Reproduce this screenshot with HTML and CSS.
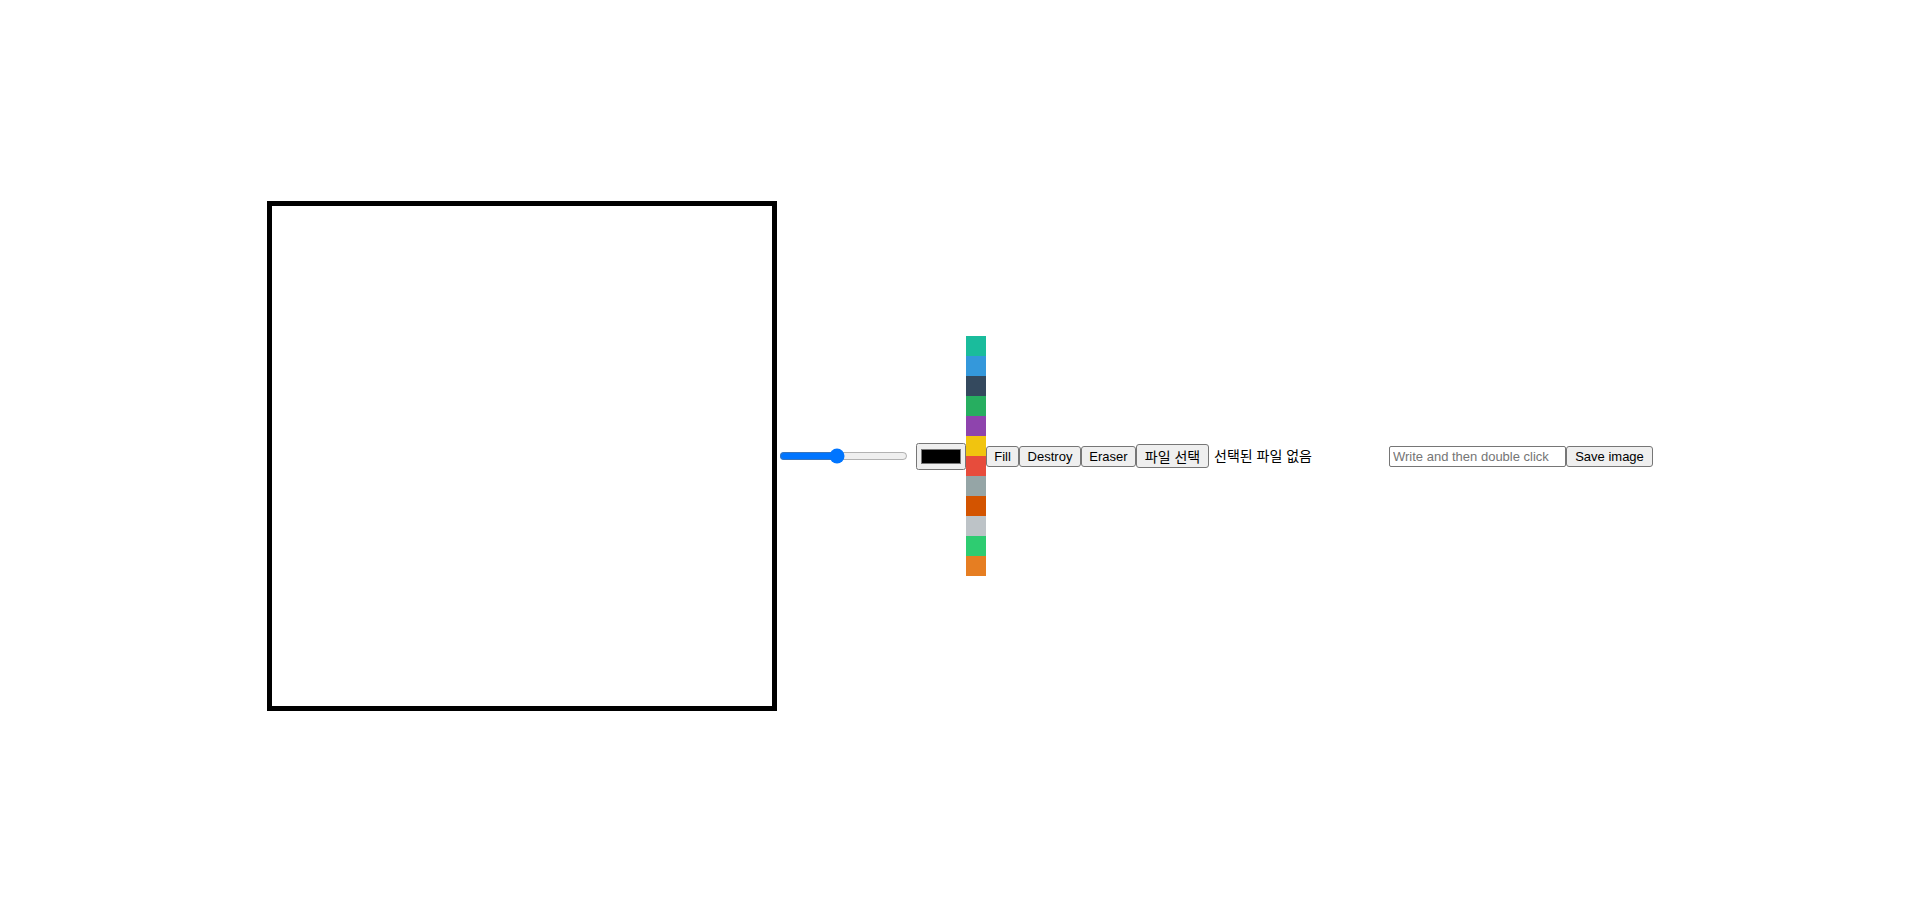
FILE: index.html
```
<!DOCTYPE html>
<html lang="ko">
<head>
<meta charset="UTF-8">
<title>Paint board</title>
<link rel="stylesheet" href="styles.css">
</head>
<body>
<canvas class="board" width="500" height="500"></canvas>
<input class="line-width" type="range" min="1" max="10" value="5" aria-label="Line width">
<input class="color-picker" type="color" value="#000000" aria-label="Color">
<div class="palette">
  <button type="button" class="swatch turquoise" aria-label="Turquoise"></button>
  <button type="button" class="swatch blue" aria-label="Blue"></button>
  <button type="button" class="swatch navy" aria-label="Navy"></button>
  <button type="button" class="swatch green" aria-label="Green"></button>
  <button type="button" class="swatch purple" aria-label="Purple"></button>
  <button type="button" class="swatch yellow" aria-label="Yellow"></button>
  <button type="button" class="swatch red" aria-label="Red"></button>
  <button type="button" class="swatch gray" aria-label="Gray"></button>
  <button type="button" class="swatch pumpkin" aria-label="Pumpkin"></button>
  <button type="button" class="swatch silver" aria-label="Silver"></button>
  <button type="button" class="swatch emerald" aria-label="Emerald"></button>
  <button type="button" class="swatch orange" aria-label="Orange"></button>
</div>
<button type="button" class="btn fill">Fill</button>
<button type="button" class="btn destroy">Destroy</button>
<button type="button" class="btn eraser">Eraser</button>
<label class="file" for="file">
  <input class="file-input" id="file" type="file" accept="image/*">
  <span class="btn file-btn">파일 선택</span>
  <span class="file-name">선택된 파일 없음</span>
</label>
<input class="text" type="text" placeholder="Write and then double click" aria-label="Text">
<button type="button" class="btn save">Save image</button>
</body>
</html>
```
FILE: styles.css
```
* {
  box-sizing: border-box;
}

body {
  display: flex;
  justify-content: center;
  align-items: center;
  min-height: 100vh;
  margin: 0;
  background: #fff;
  color: #000;
  font: 13px "Liberation Sans", Arial, "Noto Sans CJK KR", sans-serif;
}

.board {
  box-sizing: content-box;
  flex: none;
  border: 5px solid #000;
}

.line-width {
  width: 129px;
  margin: 2px 8px 2px 2px;
}

.color-picker {
  width: 50px;
  height: 27px;
}

.palette {
  display: flex;
  flex-direction: column;
}

.swatch {
  width: 20px;
  height: 20px;
  padding: 0;
  border: 0;
}

.turquoise { background: #1abc9c; }
.blue { background: #3498db; }
.navy { background: #34495e; }
.green { background: #27ae60; }
.purple { background: #8e44ad; }
.yellow { background: #f1c40f; }
.red { background: #e74c3c; }
.gray { background: #95a5a6; }
.pumpkin { background: #d35400; }
.silver { background: #bdc3c7; }
.emerald { background: #2ecc71; }
.orange { background: #e67e22; }

.btn {
  padding: 1px 6px;
  border: 1px solid #767676;
  border-radius: 3px;
  background: #efefef;
  color: #000;
  font: inherit;
  line-height: 17px;
  text-align: center;
  white-space: nowrap;
}

.fill { min-width: 33px; }
.destroy { min-width: 62px; }
.eraser { min-width: 55px; }
.save { min-width: 87px; }

.file {
  display: flex;
  align-items: center;
  gap: 5px;
  position: relative;
  width: 253px;
  font-size: 14px;
  line-height: 20px;
  white-space: nowrap;
}

.file-btn {
  min-width: 73px;
  height: 24px;
  line-height: 22px;
}

.file-input {
  position: absolute;
  width: 1px;
  height: 1px;
  opacity: 0;
}

.text {
  width: 177px;
  height: 21px;
  padding: 1px 3px;
  border: 1px solid #767676;
  border-radius: 2px;
  font: inherit;
}

.text::placeholder {
  color: #757575;
}
```
